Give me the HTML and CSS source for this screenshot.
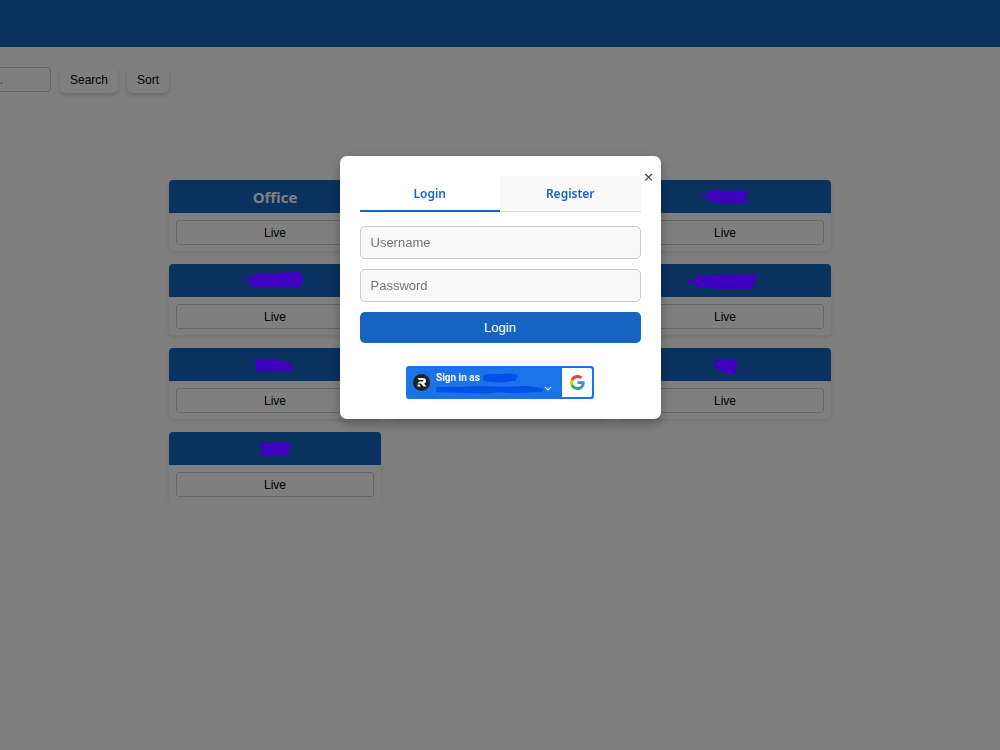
FILE: index.html
```html
<!DOCTYPE html>
<html lang="en">
<head>
    <meta charset="UTF-8">
    <title>Rooms</title>
    <link rel="stylesheet" href="styles.css">
</head>
<body>
    <header class="top-bar"></header>

    <div class="toolbar">
        <input type="text" class="search-input" placeholder="Search..." aria-label="Search rooms">
        <button type="button" class="tool-btn">Search</button>
        <button type="button" class="tool-btn">Sort</button>
    </div>

    <main class="rooms">
        <div class="room">
            <h2 class="room-title">Office</h2>
            <div class="room-body"><button type="button" class="live-btn">Live</button></div>
        </div>
        <div class="room">
            <div class="room-title"></div>
            <div class="room-body"></div>
        </div>
        <div class="room">
            <div class="room-title">
                <svg class="mark" viewBox="261 49 228 60"><path d="M303 70L322 68L324 60L350 56L362 60L438 60L441 74L436 84L440 90L438 98L370 98L325 93L330 82L303 75Z"/></svg>
            </div>
            <div class="room-body"><button type="button" class="live-btn">Live</button></div>
        </div>

        <div class="room">
            <div class="room-title">
                <svg class="mark" viewBox="232 46 228 60"><path d="M250 68L288 60L288 53L350 52L415 48L422 55L438 62L425 68L435 76L415 84L430 88L415 95L272 95L278 88L262 82L265 73Z"/></svg>
            </div>
            <div class="room-body"><button type="button" class="live-btn">Live</button></div>
        </div>
        <div class="room">
            <div class="room-title"></div>
            <div class="room-body"></div>
        </div>
        <div class="room">
            <div class="room-title">
                <svg class="mark" viewBox="261 301 228 60"><path d="M260 332L287 326L289 317L345 314L472 311L470 322L462 332L468 338L452 355L380 356L290 350L286 338L262 338Z"/></svg>
            </div>
            <div class="room-body"><button type="button" class="live-btn">Live</button></div>
        </div>

        <div class="room">
            <div class="room-title">
                <svg class="mark" viewBox="232 299 228 60"><path d="M283 312L355 310L358 317L388 320L392 328L400 335L398 347L288 348L292 340L285 335L290 325Z"/></svg>
            </div>
            <div class="room-body"><button type="button" class="live-btn">Live</button></div>
        </div>
        <div class="room">
            <div class="room-title"></div>
            <div class="room-body"></div>
        </div>
        <div class="room">
            <div class="room-title">
                <svg class="mark" viewBox="261 163 228 60"><path d="M345 176L410 178L408 215L398 222L370 218L368 211L352 208L350 200L334 195L346 186Z"/></svg>
            </div>
            <div class="room-body"><button type="button" class="live-btn">Live</button></div>
        </div>

        <div class="room">
            <div class="room-title">
                <svg class="mark" viewBox="232 162 228 60"><path d="M300 174L388 171L388 179L396 186L388 192L380 196L392 205L378 212L300 213L298 207L310 200L310 190L298 183Z"/></svg>
            </div>
            <div class="room-body"><button type="button" class="live-btn">Live</button></div>
        </div>
    </main>

    <!-- Login / register popup -->
    <div class="overlay">
        <div class="modal">
            <button type="button" class="close-btn" aria-label="Close">&times;</button>
            <div class="tabs">
                <button type="button" class="tab active">Login</button>
                <button type="button" class="tab">Register</button>
            </div>
            <form class="login-form">
                <input type="text" placeholder="Username" aria-label="Username">
                <input type="password" placeholder="Password" aria-label="Password">
                <button type="submit" class="submit-btn">Login</button>
            </form>
            <button type="button" class="google-btn">
                <svg class="avatar" viewBox="0 0 34 34">
                    <circle cx="17" cy="17" r="17" fill="#202124"/>
                    <path d="M9 8H19Q26 8 26 14Q26 18 22 19.500L27 25H21L16 19H9L12 15H19Q21 15 21 13.500Q21 12 19 12H12Z" fill="#fff"/>
                    <path d="M9 21H13L15.500 25H9Z" fill="#fff"/>
                </svg>
                <span class="account">
                    <span class="account-name">Sign in as
                        <svg class="name-mark" viewBox="0 0 105 30"><path d="M3 6L25 2L50 4L80 1L102 5L105 13L98 18L101 23L80 25L60 29L20 27L2 23L0 14Z"/></svg>
                    </span>
                    <svg class="mail-mark" viewBox="0 0 324 27"><path d="M2 5L70 6L130 2L200 5L270 3L300 7L324 12L318 20L290 22L240 24L190 22L150 26L90 23L2 22L0 12Z"/></svg>
                </span>
                <svg class="chevron" viewBox="0 0 8 5"><path d="M1 1L4 4L7 1" fill="none" stroke="#e8f0fe" stroke-width="1.200"/></svg>
                <span class="google-logo">
                    <svg viewBox="0 0 48 48">
                        <path fill="#EA4335" d="M24 9.500c3.540 0 6.710 1.220 9.210 3.600l6.850-6.850C35.900 2.380 30.470 0 24 0 14.620 0 6.510 5.380 2.560 13.220l7.980 6.190C12.430 13.720 17.740 9.500 24 9.500z"/>
                        <path fill="#4285F4" d="M46.980 24.550c0-1.570-.15-3.090-.38-4.550H24v9.020h12.940c-.58 2.960-2.260 5.480-4.780 7.180l7.730 6c4.510-4.180 7.090-10.360 7.090-17.650z"/>
                        <path fill="#FBBC05" d="M10.530 28.590c-.48-1.450-.76-2.990-.76-4.590s.27-3.140.76-4.590l-7.980-6.190C.92 16.460 0 20.120 0 24s.92 7.540 2.560 10.780l7.970-6.190z"/>
                        <path fill="#34A853" d="M24 48c6.480 0 11.930-2.130 15.890-5.810l-7.730-6c-2.150 1.450-4.920 2.300-8.160 2.300-6.260 0-11.570-4.220-13.470-9.910l-7.980 6.190C6.510 42.620 14.620 48 24 48z"/>
                    </svg>
                </span>
            </button>
        </div>
    </div>
</body>
</html>
```
FILE: styles.css
```css
* {
    box-sizing: border-box;
}
body {
    margin: 0;
    font-family: "Open Sans", sans-serif;
    background-color: #fff;
}
button, input {
    margin: 0;
    font-family: Arial, "Liberation Sans", sans-serif;
    font-size: 12px;
}
button {
    cursor: pointer;
}
.top-bar {
    height: 47px;
    background-color: #1565c0;
}

/* Search and sort */
.toolbar {
    display: flex;
    justify-content: flex-end;
    align-items: flex-start;
    gap: 9px;
    width: 169px;
    padding-top: 20px;
    margin-bottom: 87px;
}
.search-input {
    flex: none;
    width: 107px;
    height: 25px;
    padding: 0 10px;
    border: 1px solid #ccc;
    border-radius: 4px;
}
.tool-btn {
    flex: none;
    height: 26px;
    padding: 0 10px;
    border: none;
    border-radius: 5px;
    background-color: #fff;
    color: #000;
    box-shadow: 0 2px 4px rgba(0, 0, 0, 0.18);
}

/* Room cards */
.rooms {
    display: grid;
    grid-template-columns: repeat(3, 1fr);
    gap: 13px;
    max-width: 662px;
    margin: 0 auto;
}
.room {
    border-radius: 4px;
    background-color: #fff;
    box-shadow: 0 2px 4px rgba(0, 0, 0, 0.1);
}
.room-title {
    display: flex;
    justify-content: center;
    align-items: center;
    height: 33px;
    margin: 0;
    border-radius: 4px 4px 0 0;
    background-color: #1565c0;
    color: #fff;
    font-size: 15px;
    font-weight: 700;
}
.mark {
    position: relative;
    z-index: 20;
    width: 76px;
    height: 20px;
    fill: #4000c0;
    overflow: visible;
}
.room-body {
    height: 38px;
    padding: 7px;
}
.live-btn {
    display: block;
    width: 100%;
    height: 25px;
    border: 1px solid #ccc;
    border-radius: 3px;
    background-color: #fff;
    color: #000;
}

/* Popup */
.overlay {
    position: fixed;
    inset: 0;
    z-index: 10;
    display: flex;
    justify-content: center;
    align-items: flex-start;
    padding-top: 156px;
    background-color: rgba(0, 0, 0, 0.5);
}
.modal {
    position: relative;
    width: 321px;
    padding: 20px;
    border-radius: 7px;
    background-color: #fff;
    box-shadow: 0 4px 12px rgba(0, 0, 0, 0.3);
}
.close-btn {
    position: absolute;
    top: 12px;
    right: 7px;
    padding: 0;
    border: none;
    background: none;
    color: #444;
    font-family: "Noto Sans", sans-serif;
    font-size: 17px;
    line-height: 17px;
}
.tabs {
    display: flex;
    margin-bottom: 14px;
}
.tab {
    flex: 1;
    height: 36px;
    padding: 0;
    border: none;
    border-bottom: 1px solid #ddd;
    background-color: #f9f9f9;
    color: #1565c0;
    font-family: "Noto Sans", sans-serif;
    font-size: 12px;
    font-weight: 600;
}
.tab.active {
    border-bottom: 2px solid #1565c0;
    background-color: #fff;
}
.login-form {
    display: flex;
    flex-direction: column;
    gap: 10px;
    margin-bottom: 23px;
}
.login-form input {
    height: 33px;
    padding: 0 10px;
    border: 1px solid #ccc;
    border-radius: 5px;
    background-color: #f9f9f9;
    font-size: 13px;
}
.submit-btn {
    height: 31px;
    border: none;
    border-radius: 5px;
    background-color: #1565c0;
    color: #fff;
    font-size: 13px;
}

/* Google sign in */
.google-btn {
    display: flex;
    align-items: center;
    width: 188px;
    height: 33px;
    margin: 0 auto;
    padding: 2px 2px 2px 7px;
    border: none;
    border-radius: 3px;
    background-color: #1a73e8;
    color: #fff;
    font-family: Roboto, sans-serif;
    font-size: 10px;
    font-weight: 700;
}
.avatar {
    width: 17px;
    height: 17px;
    margin-right: 6px;
}
.account {
    display: flex;
    flex-direction: column;
    gap: 1px;
}
.account-name {
    display: flex;
    align-items: center;
    gap: 3px;
    line-height: 12px;
}
.name-mark, .mail-mark {
    fill: #004fe6;
}
.name-mark {
    width: 35px;
    height: 10px;
}
.mail-mark {
    width: 108px;
    height: 9px;
}
.chevron {
    width: 8px;
    height: 5px;
    margin-top: 12px;
}
.google-logo {
    display: flex;
    justify-content: center;
    align-items: center;
    width: 30px;
    height: 29px;
    margin-left: auto;
    border-radius: 0 2px 2px 0;
    background-color: #fff;
}
.google-logo svg {
    width: 15px;
    height: 15px;
}
```
